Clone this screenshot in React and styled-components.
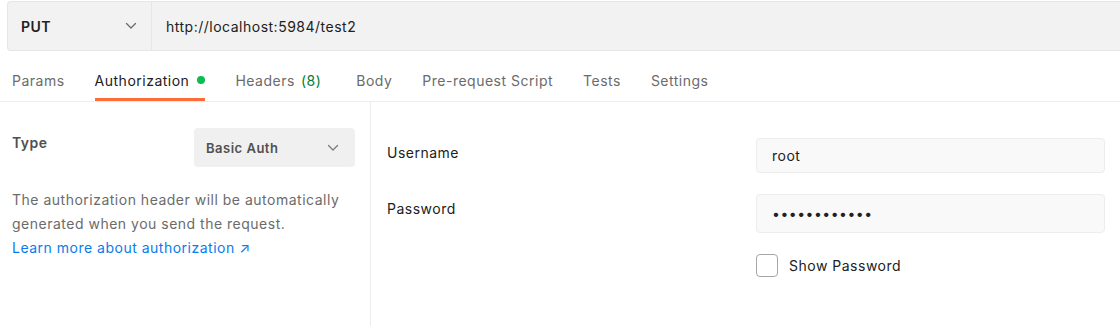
import React from "react";
import styled, { createGlobalStyle } from "styled-components";

const Global = createGlobalStyle`
  html, body { margin: 0; padding: 0; background: #ffffff; }
  body { font-family: Inter, "Noto Sans", "Liberation Sans", sans-serif; font-size: 14px; color: #212121; letter-spacing: 0.5px; }
  * { box-sizing: border-box; }
`;

const Page = styled.div`
  width: 1120px;
  height: 326px;
  overflow: hidden;
  display: flex;
  flex-direction: column;
`;

const UrlBar = styled.div`
  display: flex;
  height: 50px;
  margin: 1px 0 0 7px;
  background: #f2f2f2;
  border: 1px solid #e6e6e6;
  border-right: none;
  border-radius: 4px 0 0 4px;
`;

const MethodSelect = styled.div`
  width: 144px;
  flex: none;
  display: flex;
  align-items: center;
  justify-content: space-between;
  padding: 0 14px 0 13px;
  border-right: 1px solid #e6e6e6;
  font-weight: 600;
  font-size: 14px;
  color: #212121;
`;

const UrlText = styled.div`
  display: flex;
  align-items: center;
  padding-left: 14px;
  font-size: 14px;
  color: #212121;
`;

const Chevron = ({ color = "#6b6b6b" }) => (
  <svg width="12" height="8" viewBox="0 0 12 8" fill="none">
    <polyline points="1.5,1.5 6,6 10.5,1.5" stroke={color} strokeWidth="1.3" strokeLinecap="round" strokeLinejoin="round" />
  </svg>
);

const Tabs = styled.div`
  display: flex;
  gap: 30px;
  margin-top: 10px;
  padding-left: 12px;
  height: 41px;
  border-bottom: 1px solid #ededed;
`;

const Tab = styled.div`
  display: flex;
  align-items: center;
  gap: 6px;
  height: 40px;
  padding-top: 1px;
  margin-right: ${(p) => p.$extra || 0}px;
  font-size: 14px;
  color: ${(p) => (p.$active ? "#212121" : "#6b6b6b")};
  border-bottom: 3px solid ${(p) => (p.$active ? "#ff6c37" : "transparent")};
  margin-bottom: -1px;
`;

const Dot = styled.span`
  width: 8px;
  height: 8px;
  border-radius: 50%;
  background: #0cbb52;
  margin-left: 2px;
`;

const Count = styled.span`
  color: #007f31;
`;

const Content = styled.div`
  display: flex;
  flex: 1;
`;

const LeftPanel = styled.div`
  width: 371px;
  flex: none;
  border-right: 1px solid #ededed;
  padding: 26px 15px 0 12px;
`;

const TypeRow = styled.div`
  display: flex;
  justify-content: space-between;
  align-items: flex-start;
`;

const TypeLabel = styled.div`
  padding-top: 5px;
  font-weight: 600;
  font-size: 14px;
  line-height: 20px;
  color: #505050;
`;

const Dropdown = styled.div`
  width: 161px;
  height: 39px;
  display: flex;
  align-items: center;
  justify-content: space-between;
  padding: 0 16px 0 12px;
  background: #f0f0f0;
  border-radius: 4px;
  font-weight: 600;
  font-size: 13px;
  color: #505050;
`;

const Description = styled.p`
  margin: 21px 0 0;
  font-size: 14px;
  line-height: 24px;
  color: #6b6b6b;
`;

const Link = styled.a`
  color: #097bed;
  text-decoration: none;
  display: inline-block;
  line-height: 22px;
`;

const RightPanel = styled.div`
  flex: 1;
  padding: 36px 15px 0 16px;
  display: grid;
  grid-template-columns: 1fr 349px;
  grid-auto-rows: min-content;
  row-gap: 21px;
`;

const FieldLabel = styled.label`
  padding-top: 5px;
  font-size: 14px;
  line-height: 20px;
  color: #212121;
`;

const TextInput = styled.input`
  width: 100%;
  height: ${(p) => p.$h}px;
  padding: 0 15px;
  background: #f9f9f9;
  border: 1px solid #ededed;
  border-radius: 4px;
  font-family: Inter, "Noto Sans", sans-serif;
  font-size: 14px;
  color: #212121;
  outline: none;
  letter-spacing: 0.5px;
`;

const CheckRow = styled.label`
  grid-column: 2;
  display: flex;
  align-items: center;
  gap: 11px;
  font-size: 14px;
  color: #212121;
`;

const Box = styled.span`
  width: 22px;
  height: 23px;
  border: 1px solid #a6a6a6;
  border-radius: 4px;
  background: #ffffff;
`;

export default function App() {
  return (
    <Page>
      <Global />
      <UrlBar>
        <MethodSelect>
          <span>PUT</span>
          <Chevron />
        </MethodSelect>
        <UrlText>http://localhost:5984/test2</UrlText>
      </UrlBar>
      <Tabs>
        <Tab>Params</Tab>
        <Tab $active>
          Authorization<Dot />
        </Tab>
        <Tab $extra={5}>
          Headers <Count>(8)</Count>
        </Tab>
        <Tab>Body</Tab>
        <Tab>Pre-request Script</Tab>
        <Tab>Tests</Tab>
        <Tab>Settings</Tab>
      </Tabs>
      <Content>
        <LeftPanel>
          <TypeRow>
            <TypeLabel>Type</TypeLabel>
            <Dropdown>
              <span>Basic Auth</span>
              <Chevron color="#7a7a7a" />
            </Dropdown>
          </TypeRow>
          <Description>
            The authorization header will be automatically generated when you send the request.
            <br />
            <Link href="#">Learn more about authorization ↗</Link>
          </Description>
        </LeftPanel>
        <RightPanel>
          <FieldLabel>Username</FieldLabel>
          <TextInput $h={35} type="text" value="root" readOnly />
          <FieldLabel>Password</FieldLabel>
          <TextInput $h={39} type="password" value="couchdbadmin" readOnly />
          <CheckRow>
            <Box />
            Show Password
          </CheckRow>
        </RightPanel>
      </Content>
    </Page>
  );
}
